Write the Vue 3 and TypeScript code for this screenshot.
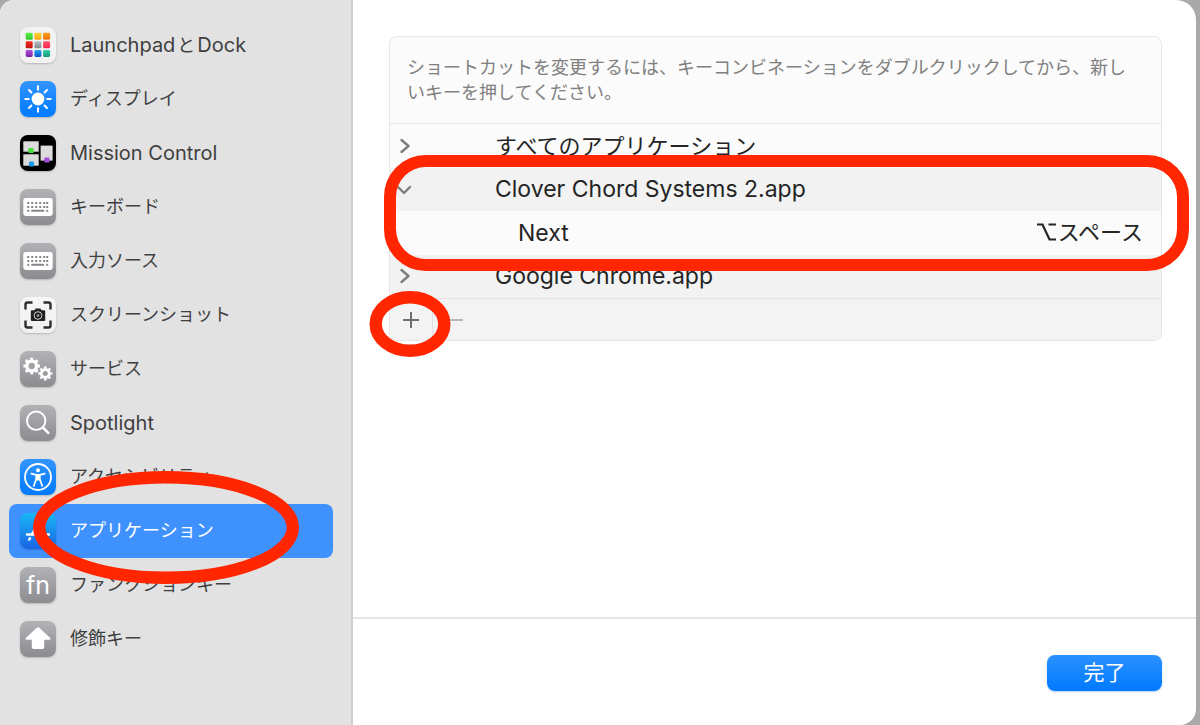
<script setup lang="ts">
interface Pane {
  icon: string
  label: string
  latin?: boolean
  mixed?: boolean
  selected?: boolean
}

const panes: Pane[] = [
  { icon: 'launchpad', label: 'Launchpad', mixed: true },
  { icon: 'display', label: 'ディスプレイ' },
  { icon: 'mission', label: 'Mission Control', latin: true },
  { icon: 'keyboard', label: 'キーボード' },
  { icon: 'keyboard', label: '入力ソース' },
  { icon: 'screenshot', label: 'スクリーンショット' },
  { icon: 'services', label: 'サービス' },
  { icon: 'spotlight', label: 'Spotlight', latin: true },
  { icon: 'access', label: 'アクセシビリティ' },
  { icon: 'apps', label: 'アプリケーション', selected: true },
  { icon: 'fn', label: 'ファンクションキー' },
  { icon: 'modifier', label: '修飾キー' },
]

interface Tile {
  x: number
  y: number
  fill: string
}

const tiles: Tile[] = [
  { x: 5.7, y: 5.7, fill: 'url(#g-green)' },
  { x: 14.4, y: 5.7, fill: 'url(#g-yellow)' },
  { x: 23.1, y: 5.7, fill: 'url(#g-orange)' },
  { x: 5.7, y: 14.3, fill: 'url(#g-red)' },
  { x: 14.4, y: 14.3, fill: 'url(#g-gray)' },
  { x: 23.1, y: 14.3, fill: 'url(#g-pink)' },
  { x: 5.7, y: 23, fill: 'url(#g-purple)' },
  { x: 14.4, y: 23, fill: 'url(#g-blue)' },
  { x: 23.1, y: 23, fill: 'url(#g-teal)' },
]

const gradients = [
  { id: 'g-green', from: '#5df04c', to: '#2fc52a' },
  { id: 'g-yellow', from: '#ffd23a', to: '#fba70c' },
  { id: 'g-orange', from: '#fb9a1c', to: '#ef7407' },
  { id: 'g-red', from: '#f5321f', to: '#c30d0d' },
  { id: 'g-gray', from: '#b9c0c4', to: '#7f878c' },
  { id: 'g-pink', from: '#ff5470', to: '#fb2350' },
  { id: 'g-purple', from: '#b254d8', to: '#7a1fa8' },
  { id: 'g-blue', from: '#1fa9f2', to: '#0a52c8' },
  { id: 'g-teal', from: '#35cfae', to: '#109a72' },
]

const keyCols = [8, 12, 16, 20, 24, 27]
const teeth = [0, 45, 90, 135, 180, 225, 270, 315]
</script>

<template>
  <div class="desktop">
    <div class="window">
      <nav class="sidebar" aria-label="ショートカット">
        <button
          v-for="pane in panes"
          :key="pane.label"
          type="button"
          class="pane"
          :class="{ selected: pane.selected, latin: pane.latin || pane.mixed }"
        >
          <span class="icon" :class="pane.icon">
            <svg viewBox="0 0 36 36" aria-hidden="true">
              <template v-if="pane.icon === 'launchpad'">
                <defs>
                  <linearGradient v-for="g in gradients" :id="g.id" :key="g.id" x1="0" y1="0" x2="0" y2="1">
                    <stop offset="0" :stop-color="g.from" />
                    <stop offset="1" :stop-color="g.to" />
                  </linearGradient>
                </defs>
                <rect v-for="t in tiles" :key="t.fill" :x="t.x" :y="t.y" width="7" height="7" rx="1.4" :fill="t.fill" />
              </template>
              <template v-else-if="pane.icon === 'display'">
                <circle cx="18" cy="18" r="6.4" fill="#fff" />
                <path
                  v-for="a in teeth"
                  :key="a"
                  d="M18 5.3V8.7"
                  :transform="`rotate(${a} 18 18)`"
                  stroke="#fff"
                  stroke-width="2"
                  stroke-linecap="round"
                />
              </template>
              <template v-else-if="pane.icon === 'mission'">
                <rect x="3.3" y="6.3" width="15.4" height="10.4" fill="#dcdcdc" />
                <rect x="20.6" y="10.6" width="12" height="15" fill="#dcdcdc" />
                <rect x="3.3" y="19.3" width="15.4" height="11.4" fill="#dcdcdc" />
                <rect x="8.3" y="13" width="5.4" height="5" rx="1" fill="#46dd3f" />
                <rect x="24.3" y="22.6" width="5.2" height="5" rx="1" fill="#a44bdc" />
                <rect x="9" y="26.6" width="5" height="5" rx="1" fill="#149bf0" />
              </template>
              <template v-else-if="pane.icon === 'keyboard'">
                <rect x="3.3" y="9" width="29.4" height="18" rx="2.4" fill="#fff" />
                <g fill="#85858a">
                  <rect v-for="x in keyCols" :key="'a' + x" :x="x - 0.8" y="13" width="2" height="2" />
                  <rect v-for="x in keyCols" :key="'b' + x" :x="x - 0.8" y="17" width="2" height="2" />
                  <rect x="7.2" y="20.8" width="2" height="2" />
                  <rect x="11.2" y="20.8" width="13" height="2" rx=".6" />
                  <rect x="26.2" y="20.8" width="2" height="2" />
                </g>
              </template>
              <template v-else-if="pane.icon === 'screenshot'">
                <path
                  d="M5.500 12.500V7.500a2 2 0 0 1 2-2h5M23.500 5.500h5a2 2 0 0 1 2 2v5M30.500 23.500v5a2 2 0 0 1-2 2h-5M12.500 30.500h-5a2 2 0 0 1-2-2v-5"
                  fill="none"
                  stroke="#2e2e2e"
                  stroke-width="2.4"
                />
                <path
                  d="M12 13.200h2.500l1.200-1.600h4.600l1.200 1.600H24a1.200 1.200 0 0 1 1.200 1.200v8.400A1.200 1.200 0 0 1 24 24H12a1.200 1.200 0 0 1-1.200-1.200v-8.400A1.200 1.200 0 0 1 12 13.200z"
                  fill="#222"
                />
                <circle cx="18" cy="18.5" r="3.8" fill="#161616" stroke="#d5d5d5" stroke-width="1" />
                <circle cx="18" cy="18.5" r="1.5" fill="#8d8d8d" />
              </template>
              <template v-else-if="pane.icon === 'services'">
                <g transform="translate(11.700 15)" fill="none" stroke="#fff">
                  <circle r="4.9" stroke-width="3.4" />
                  <path v-for="a in teeth" :key="a" d="M0-6V-8.300" :transform="`rotate(${a})`" stroke-width="3" />
                </g>
                <g transform="translate(25.300 22.500)" fill="none" stroke="#fff">
                  <circle r="4" stroke-width="2.8" />
                  <path v-for="a in teeth" :key="a" d="M0-5V-7" :transform="`rotate(${a})`" stroke-width="2.5" />
                </g>
              </template>
              <template v-else-if="pane.icon === 'spotlight'">
                <g fill="none" stroke="#fff" stroke-linecap="round">
                  <circle cx="16.2" cy="15.7" r="9.2" stroke-width="1.9" />
                  <path d="M23 22.700l5.200 5.200" stroke-width="2.6" />
                </g>
              </template>
              <template v-else-if="pane.icon === 'access'">
                <circle cx="18" cy="18" r="13" fill="none" stroke="#fff" stroke-width="1.8" />
                <circle cx="18" cy="11.2" r="2" fill="#fff" />
                <path
                  d="M11.300 14.600l4.900 1.200v4.200l-2.400 7M24.700 14.600l-4.900 1.200v4.200l2.400 7"
                  fill="none"
                  stroke="#fff"
                  stroke-width="1.7"
                  stroke-linecap="round"
                  stroke-linejoin="round"
                />
                <path d="M16 15h4v6.500h-4z" fill="#fff" />
              </template>
              <template v-else-if="pane.icon === 'apps'">
                <g fill="none" stroke="#fff" stroke-width="2.4" stroke-linecap="round">
                  <path d="M7 21.500h10M23.500 21.500h5.500M19.500 8l-7.400 13M16.500 8l9.800 17.600M10 25.200l-.8 1.400" />
                </g>
              </template>
              <path
                v-else-if="pane.icon === 'modifier'"
                d="M17 6.600a1.500 1.500 0 0 1 2 0l11 10.200c1 1 .6 2-.7 2h-5.100v7.400a1.800 1.800 0 0 1-1.800 1.800h-8.800a1.800 1.800 0 0 1-1.800-1.800v-7.400H6.700c-1.300 0-1.700-1-.7-2z"
                fill="#fff"
              />
            </svg>
            <span v-if="pane.icon === 'fn'" class="fn-text">fn</span>
          </span>
          <span v-if="pane.mixed" class="label">Launchpad<span class="kana">と</span>Dock</span>
          <span v-else class="label">{{ pane.label }}</span>
          <svg v-if="pane.selected" class="mark-pane" viewBox="0 0 266 113" aria-hidden="true">
            <ellipse cx="133" cy="56.5" rx="126.8" ry="50.3" />
          </svg>
        </button>
      </nav>

      <main class="content">
        <section class="body">
          <div class="panel">
            <p class="hint">
              ショートカットを変更するには、キーコンビネーションをダブルクリックしてから、新しいキーを押してください。
            </p>
            <div class="list">
              <table>
                <tbody>
                  <tr>
                    <td class="toggle">
                      <button type="button" aria-label="開く">
                        <svg viewBox="0 0 16 16"><path d="M4.500 2l7 6-7 6" /></svg>
                      </button>
                    </td>
                    <td class="kana-text">すべてのアプリケーション</td>
                    <td></td>
                  </tr>
                  <tr class="shade">
                    <td class="toggle">
                      <button type="button" aria-label="閉じる">
                        <svg viewBox="0 0 16 16"><path d="M1 6l6 6 6-6" /></svg>
                      </button>
                    </td>
                    <td>Clover Chord Systems 2.app</td>
                    <td></td>
                  </tr>
                  <tr>
                    <td class="toggle"></td>
                    <td class="child">Next</td>
                    <td class="keys kana-text">
                      <span class="combo">
                        <svg class="option" viewBox="0 0 20 20" role="img" aria-label="option">
                          <path d="M0 2.500h5.500L12.500 17.500h6.500M11.500 2.500H19" />
                        </svg>スペース
                      </span>
                    </td>
                  </tr>
                  <tr class="shade">
                    <td class="toggle">
                      <button type="button" aria-label="開く">
                        <svg viewBox="0 0 16 16"><path d="M4.500 2l7 6-7 6" /></svg>
                      </button>
                    </td>
                    <td>Google Chrome.app</td>
                    <td></td>
                  </tr>
                </tbody>
              </table>
              <div class="mark-rows" aria-hidden="true"></div>
            </div>
            <div class="tools">
              <button type="button" class="add" aria-label="追加">
                <svg viewBox="0 0 16 16"><path d="M8 0v16M0 8h16" /></svg>
                <svg class="mark-add" viewBox="0 0 82 66" aria-hidden="true">
                  <ellipse cx="41" cy="33" rx="34.3" ry="26.8" />
                </svg>
              </button>
              <button type="button" class="remove" aria-label="削除" disabled>
                <svg viewBox="0 0 16 16"><path d="M0 8h16" /></svg>
              </button>
            </div>
          </div>
        </section>
        <footer class="actions">
          <button type="button" class="done">完了</button>
        </footer>
      </main>
    </div>
  </div>
</template>

<style>
body {
  margin: 0;
}
</style>

<style scoped>
.desktop {
  box-sizing: border-box;
  min-height: 100vh;
  display: flex;
  padding-right: 4px;
  background: #a9a9a9;
  font-family: Inter, "Noto Sans CJK JP", sans-serif;
  color: #242424;
}

button {
  font: inherit;
  color: inherit;
  border: 0;
  padding: 0;
  margin: 0;
  background: none;
}

.window {
  flex: 1;
  display: flex;
  border-radius: 14px 20px 16px 0;
  overflow: hidden;
  background: #fff;
}

.sidebar {
  box-sizing: border-box;
  width: 353px;
  flex: none;
  padding: 18px 18px 18px 9px;
  border-right: 2px solid #cfcfcf;
  background: #e2e2e2;
}

.pane {
  position: relative;
  display: flex;
  align-items: center;
  gap: 14px;
  width: 100%;
  height: 54px;
  padding-left: 11px;
  border-radius: 8px;
  font-size: 18px;
  color: #3f3f3f;
  text-align: left;
}

.pane.latin {
  font-size: 20px;
}

.kana {
  margin: 0 2px;
  font-size: 18px;
}

.pane.selected {
  z-index: 1;
  background: #3f92fe;
  color: #fff;
}

.label {
  line-height: 24px;
  white-space: nowrap;
}

.icon {
  position: relative;
  flex: none;
  width: 36px;
  height: 36px;
  border-radius: 8px;
  background: linear-gradient(#b1b1b6, #8b8b90);
  box-shadow: 0 1px 2px rgba(0, 0, 0, 0.2);
}

.icon svg {
  display: block;
  width: 36px;
  height: 36px;
}

.icon.launchpad {
  background: #f2f2f2;
}

.icon.screenshot {
  background: linear-gradient(#f7f7f7, #efefef);
}

.icon.display,
.icon.access {
  background: linear-gradient(#3395ff, #007aff);
}

.icon.mission {
  background: #000;
}

.icon.apps {
  background: linear-gradient(#18b8f6, #1a64e4);
}

.fn-text {
  position: absolute;
  inset: 0;
  display: flex;
  align-items: center;
  justify-content: center;
  font-size: 25px;
  line-height: 36px;
  color: #fff;
}

.mark-pane,
.mark-add {
  position: absolute;
  fill: none;
  stroke: #ff2600;
  stroke-width: 12.4;
  pointer-events: none;
}

.mark-pane {
  left: 24px;
  top: -33px;
  width: 266px;
  height: 113px;
}

.content {
  flex: 1;
  min-width: 0;
  display: flex;
  flex-direction: column;
}

.body {
  flex: 1;
  padding: 36px 34px 36px 36px;
}

.panel {
  border: 1px solid #e6e6e6;
  border-radius: 8px;
  background: #fbfbfb;
}

.hint {
  margin: 0;
  padding: 18px 17px;
  border-bottom: 1px solid #e6e6e6;
  font-size: 18px;
  line-height: 25px;
  color: #808080;
}

.list {
  position: relative;
}

table {
  width: 100%;
  height: 174px;
  border-collapse: collapse;
  font-size: 23px;
  line-height: 28px;
}

td {
  height: 43px;
  padding: 0;
}

.kana-text {
  font-size: 22px;
}

.shade {
  background: #f2f2f2;
}

.toggle {
  width: 105px;
}

.toggle button {
  display: block;
  margin-left: 7px;
}

.toggle svg {
  display: block;
  width: 16px;
  height: 16px;
  fill: none;
  stroke: #7d7d7d;
  stroke-width: 2.4;
  stroke-linecap: round;
  stroke-linejoin: round;
}

.child {
  padding-left: 23px;
}

.keys {
  padding-right: 18px;
  text-align: right;
}

.combo {
  display: inline-flex;
  align-items: center;
  gap: 1px;
}

.option {
  width: 20px;
  height: 20px;
  fill: none;
  stroke: #242424;
  stroke-width: 2.2;
}

.mark-rows {
  position: absolute;
  inset: 31px -28px 27px -6px;
  border: 12px solid #ff2600;
  border-radius: 42px;
  pointer-events: none;
}

.tools {
  display: flex;
  height: 41px;
  border-top: 1px solid #e2e2e2;
  border-radius: 0 0 8px 8px;
  background: #f3f3f3;
}

.tools svg {
  display: block;
  width: 16px;
  height: 16px;
  fill: none;
  stroke: #6e6e6e;
  stroke-width: 2;
}

.tools button {
  display: flex;
  align-items: center;
  justify-content: center;
  width: 43px;
}

.tools .add {
  position: relative;
  border-right: 1px solid #e0e0e0;
}

.tools .remove svg {
  stroke: #b8b8b8;
}

.tools .mark-add {
  left: -21px;
  top: -8px;
  width: 82px;
  height: 66px;
  stroke: #ff2600;
  stroke-width: 12.4;
}

.actions {
  box-sizing: border-box;
  display: flex;
  justify-content: flex-end;
  height: 108px;
  padding: 36px 34px;
  border-top: 2px solid #e4e4e4;
}

.done {
  width: 115px;
  height: 36px;
  border-radius: 8px;
  background: linear-gradient(#2b91ff, #007aff);
  box-shadow: 0 1px 2px rgba(0, 90, 220, 0.3);
  font-size: 21px;
  line-height: 34px;
  color: #fff;
}
</style>
